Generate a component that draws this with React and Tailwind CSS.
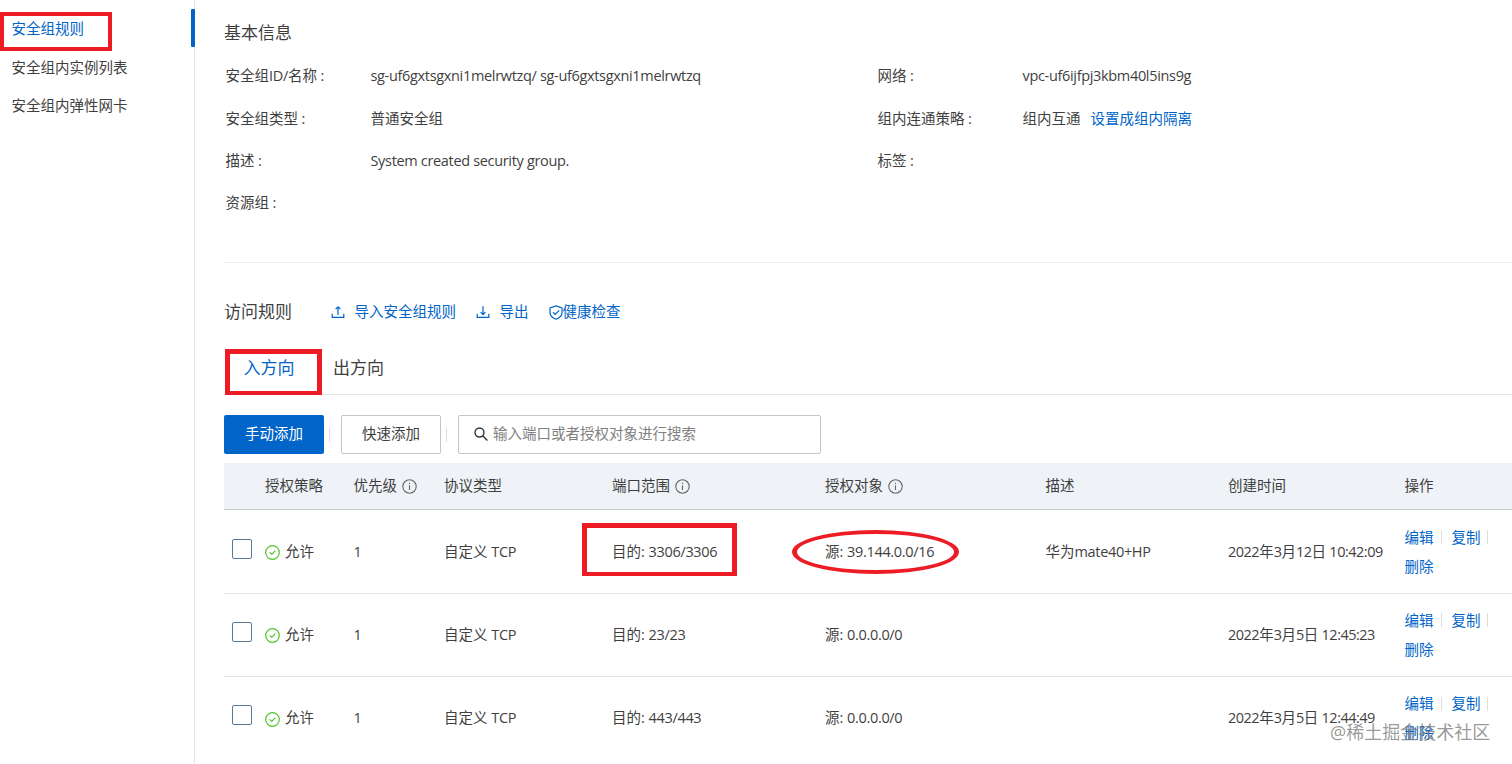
import clsx from 'clsx';

const sideItems = ['安全组规则', '安全组内实例列表', '安全组内弹性网卡'];

const rules = [
  { id: 1, port: '3306/3306', source: '39.144.0.0/16', desc: ['华为', 'mate40+HP'], day: '12', time: '10:42:09' },
  { id: 2, port: '23/23', source: '0.0.0.0/0', day: '5', time: '12:45:23' },
  { id: 3, port: '443/443', source: '0.0.0.0/0', day: '5', time: '12:44:49' },
];

const columns = 'grid grid-cols-[41px_88.5px_90.5px_168px_213px_220.5px_182.5px_176.5px_1fr]';

function ImportIcon() {
  return (
    <svg width="14" height="14" viewBox="0 0 14 14" fill="none" stroke="currentColor" strokeWidth="1.2">
      <path d="M1.2 8.8v3.6h11.6V8.8M7 10V2M4.6 4.2 7 1.8l2.4 2.4" />
    </svg>
  );
}

function ExportIcon() {
  return (
    <svg width="14" height="14" viewBox="0 0 14 14" fill="none" stroke="currentColor" strokeWidth="1.2">
      <path d="M1.2 8.8v3.6h11.6V8.8M7 1.2v8.2M4.6 7.2 7 9.6l2.4-2.4" />
    </svg>
  );
}

function ShieldIcon() {
  return (
    <svg width="14" height="15" viewBox="0 0 14 15" fill="none" stroke="currentColor" strokeWidth="1.2">
      <path d="M7 .9 13 3v5c0 3-3 5-6 6.2C4 13 1 11 1 8V3Z" />
      <path d="m4 7.2 2.3 2.2 3.9-4" />
    </svg>
  );
}

function InfoIcon() {
  return (
    <svg className="shrink-0" width="15" height="15" viewBox="0 0 15 15" fill="none" stroke="#666" strokeWidth="1.1">
      <circle cx="7.5" cy="7.5" r="6.7" />
      <path d="M7.5 6.3v4.8M7.5 3.8v1.3" />
    </svg>
  );
}

function AllowIcon() {
  return (
    <svg className="mt-0.5 shrink-0" width="15" height="15" viewBox="0 0 15 15" fill="none" stroke="#4fc52a" strokeWidth="1.2">
      <circle cx="7.5" cy="7.5" r="6.8" />
      <path d="m4.7 7.4 2.1 2 3.5-3.7" />
    </svg>
  );
}

function Field({ label, children }) {
  return (
    <div className="flex h-[42.4px] items-center">
      <div className="w-[145px] shrink-0">
        {label}<span className="ml-[3.5px]">:</span>
      </div>
      <div className="flex whitespace-nowrap">{children}</div>
    </div>
  );
}

function Latin({ children }) {
  return <span className="tracking-[-0.33px]">{children}</span>;
}

function Separator() {
  return <span className="block h-3.5 w-px bg-[#dedede]" />;
}

function RuleRow({ rule }) {
  return (
    <div className={clsx(columns, 'h-[83.2px] items-center border-b border-[#e3e4e6] last:border-b-0')}>
      <div className="pb-1.5 pl-2">
        <div className="h-5 w-5 rounded-[2px] border border-[#5a7898]" />
      </div>
      <div className="flex items-center gap-[5px]">
        <AllowIcon />
        <span>允许</span>
      </div>
      <div>1</div>
      <div>自定义 <Latin>TCP</Latin></div>
      <div>目的: <Latin>{rule.port}</Latin></div>
      <div>源: <Latin>{rule.source}</Latin></div>
      <div>{rule.desc && <>{rule.desc[0]}<Latin>{rule.desc[1]}</Latin></>}</div>
      <div className="tracking-[-0.5px] whitespace-nowrap">
        2022<span className="tracking-normal">年</span>3<span className="tracking-normal">月</span>
        {rule.day}<span className="tracking-normal">日</span> {rule.time}
      </div>
      <div className="text-[#0064c8] leading-[29px]">
        <div className="flex items-center">
          <span className="mr-[7px]">编辑</span>
          <Separator />
          <span className="mr-[6px] ml-[10px]">复制</span>
          <Separator />
        </div>
        <div>删除</div>
      </div>
    </div>
  );
}

export default function App() {
  return (
    <div className="relative flex h-[764px] w-[1512px] overflow-hidden bg-white font-['Open_Sans','Noto_Sans_CJK_SC',sans-serif] text-[14.5px] leading-[20px] text-[#3f3f3f]">
      <aside className="w-[194px] shrink-0 pt-[10px] pl-[11.5px]">
        {sideItems.map((item, i) => (
          <div key={item} className={clsx('flex h-[38.6px] items-center', i === 0 && 'text-[#0064c8]')}>
            {item}
          </div>
        ))}
      </aside>

      <main className="min-w-0 flex-1 border-l border-[#e3e4e6] pl-[29px]">
        <h2 className="pt-[21px] text-[17px] leading-[24px]">基本信息</h2>
        <section className="mt-[10px] grid h-[208px] grid-cols-[652px_1fr] content-start border-b border-[#ebebeb] pl-[1.5px]">
          <div>
            <Field label={<>安全组<Latin>ID/</Latin>名称</>}>
              <Latin>sg-uf6gxtsgxni1melrwtzq/ sg-uf6gxtsgxni1melrwtzq</Latin>
            </Field>
            <Field label="安全组类型">普通安全组</Field>
            <Field label="描述"><Latin>System created security group.</Latin></Field>
            <Field label="资源组" />
          </div>
          <div>
            <Field label="网络"><Latin>vpc-uf6ijfpj3kbm40l5ins9g</Latin></Field>
            <Field label="组内连通策略">
              组内互通<a className="ml-[10px] text-[#0064c8]">设置成组内隔离</a>
            </Field>
            <Field label="标签" />
          </div>
        </section>

        <div className="mt-[37px] flex h-6 items-center">
          <h2 className="text-[17px]">访问规则</h2>
          <div className="flex items-center pl-[38.5px] text-[#0064c8]">
            <ImportIcon />
            <span className="ml-[10px]">导入安全组规则</span>
            <span className="ml-[19.5px]"><ExportIcon /></span>
            <span className="ml-[10px]">导出</span>
            <span className="ml-[20px]"><ShieldIcon /></span>
            <span>健康检查</span>
          </div>
        </div>

        <div className="mt-[17px] flex h-[54px] border-b border-[#e3e4e6] pt-[15px] text-[17px] leading-[24px]">
          <div className="w-[109px] pl-[19.5px] text-[#0064c8]">入方向</div>
          <div>出方向</div>
        </div>

        <div className="mt-[20px] flex h-[39px] items-center">
          <button className="h-full w-[100px] rounded-[2px] bg-[#0064c8] pb-0.5 text-white">手动添加</button>
          <span className="mr-[11px] ml-[5px]"><Separator /></span>
          <button className="h-full w-[100px] rounded-[2px] border border-[#c0c6cc] pb-0.5">快速添加</button>
          <span className="mr-[11px] ml-[5px]"><Separator /></span>
          <div className="flex h-full w-[363px] items-center rounded-[2px] border border-[#c0c6cc] pb-0.5 pl-[15px] text-[#808080]">
            <svg width="14" height="14" viewBox="0 0 14 14" fill="none" stroke="#333" strokeWidth="1.4">
              <circle cx="5.5" cy="5.5" r="4.5" />
              <path d="m8.7 8.7 4.7 4.7" />
            </svg>
            <span className="ml-[5px]">输入端口或者授权对象进行搜索</span>
          </div>
        </div>

        <div className={clsx(columns, 'mt-[9px] h-[47px] items-center border-b border-[#c8cdd1] bg-[#eff3f8]')}>
          <div />
          <div>授权策略</div>
          <div className="flex items-center gap-[5px]">优先级<InfoIcon /></div>
          <div>协议类型</div>
          <div className="flex items-center gap-[5px]">端口范围<InfoIcon /></div>
          <div className="flex items-center gap-[5px]">授权对象<InfoIcon /></div>
          <div>描述</div>
          <div>创建时间</div>
          <div>操作</div>
        </div>
        <div className="pt-[0.5px]">
          {rules.map((rule) => <RuleRow key={rule.id} rule={rule} />)}
        </div>
      </main>

      {/* active menu marker */}
      <div className="absolute top-[9px] left-[191px] h-[38px] w-1 rounded-[1px] bg-[#0064c8]" />

      {/* highlights */}
      <div className="absolute top-[12px] left-0 h-[39px] w-[112px] border-4 border-[#ed1c24]" />
      <div className="absolute top-[349px] left-[225px] h-[46px] w-[97px] border-5 border-b-4 border-[#ed1c24]" />
      <div className="absolute top-[523px] left-[582px] h-[53px] w-[155px] border-5 border-b-4 border-[#ed1c24]" />
      <div className="absolute top-[530px] left-[792px] h-[44px] w-[167px] rounded-[50%] border-x-5 border-y-4 border-[#ed1c24]" />

      <div className="absolute top-[720px] left-[1330px] text-[18px] leading-[24px] whitespace-nowrap text-[#777]/75">
        @稀土掘金技术社区
      </div>
    </div>
  );
}
